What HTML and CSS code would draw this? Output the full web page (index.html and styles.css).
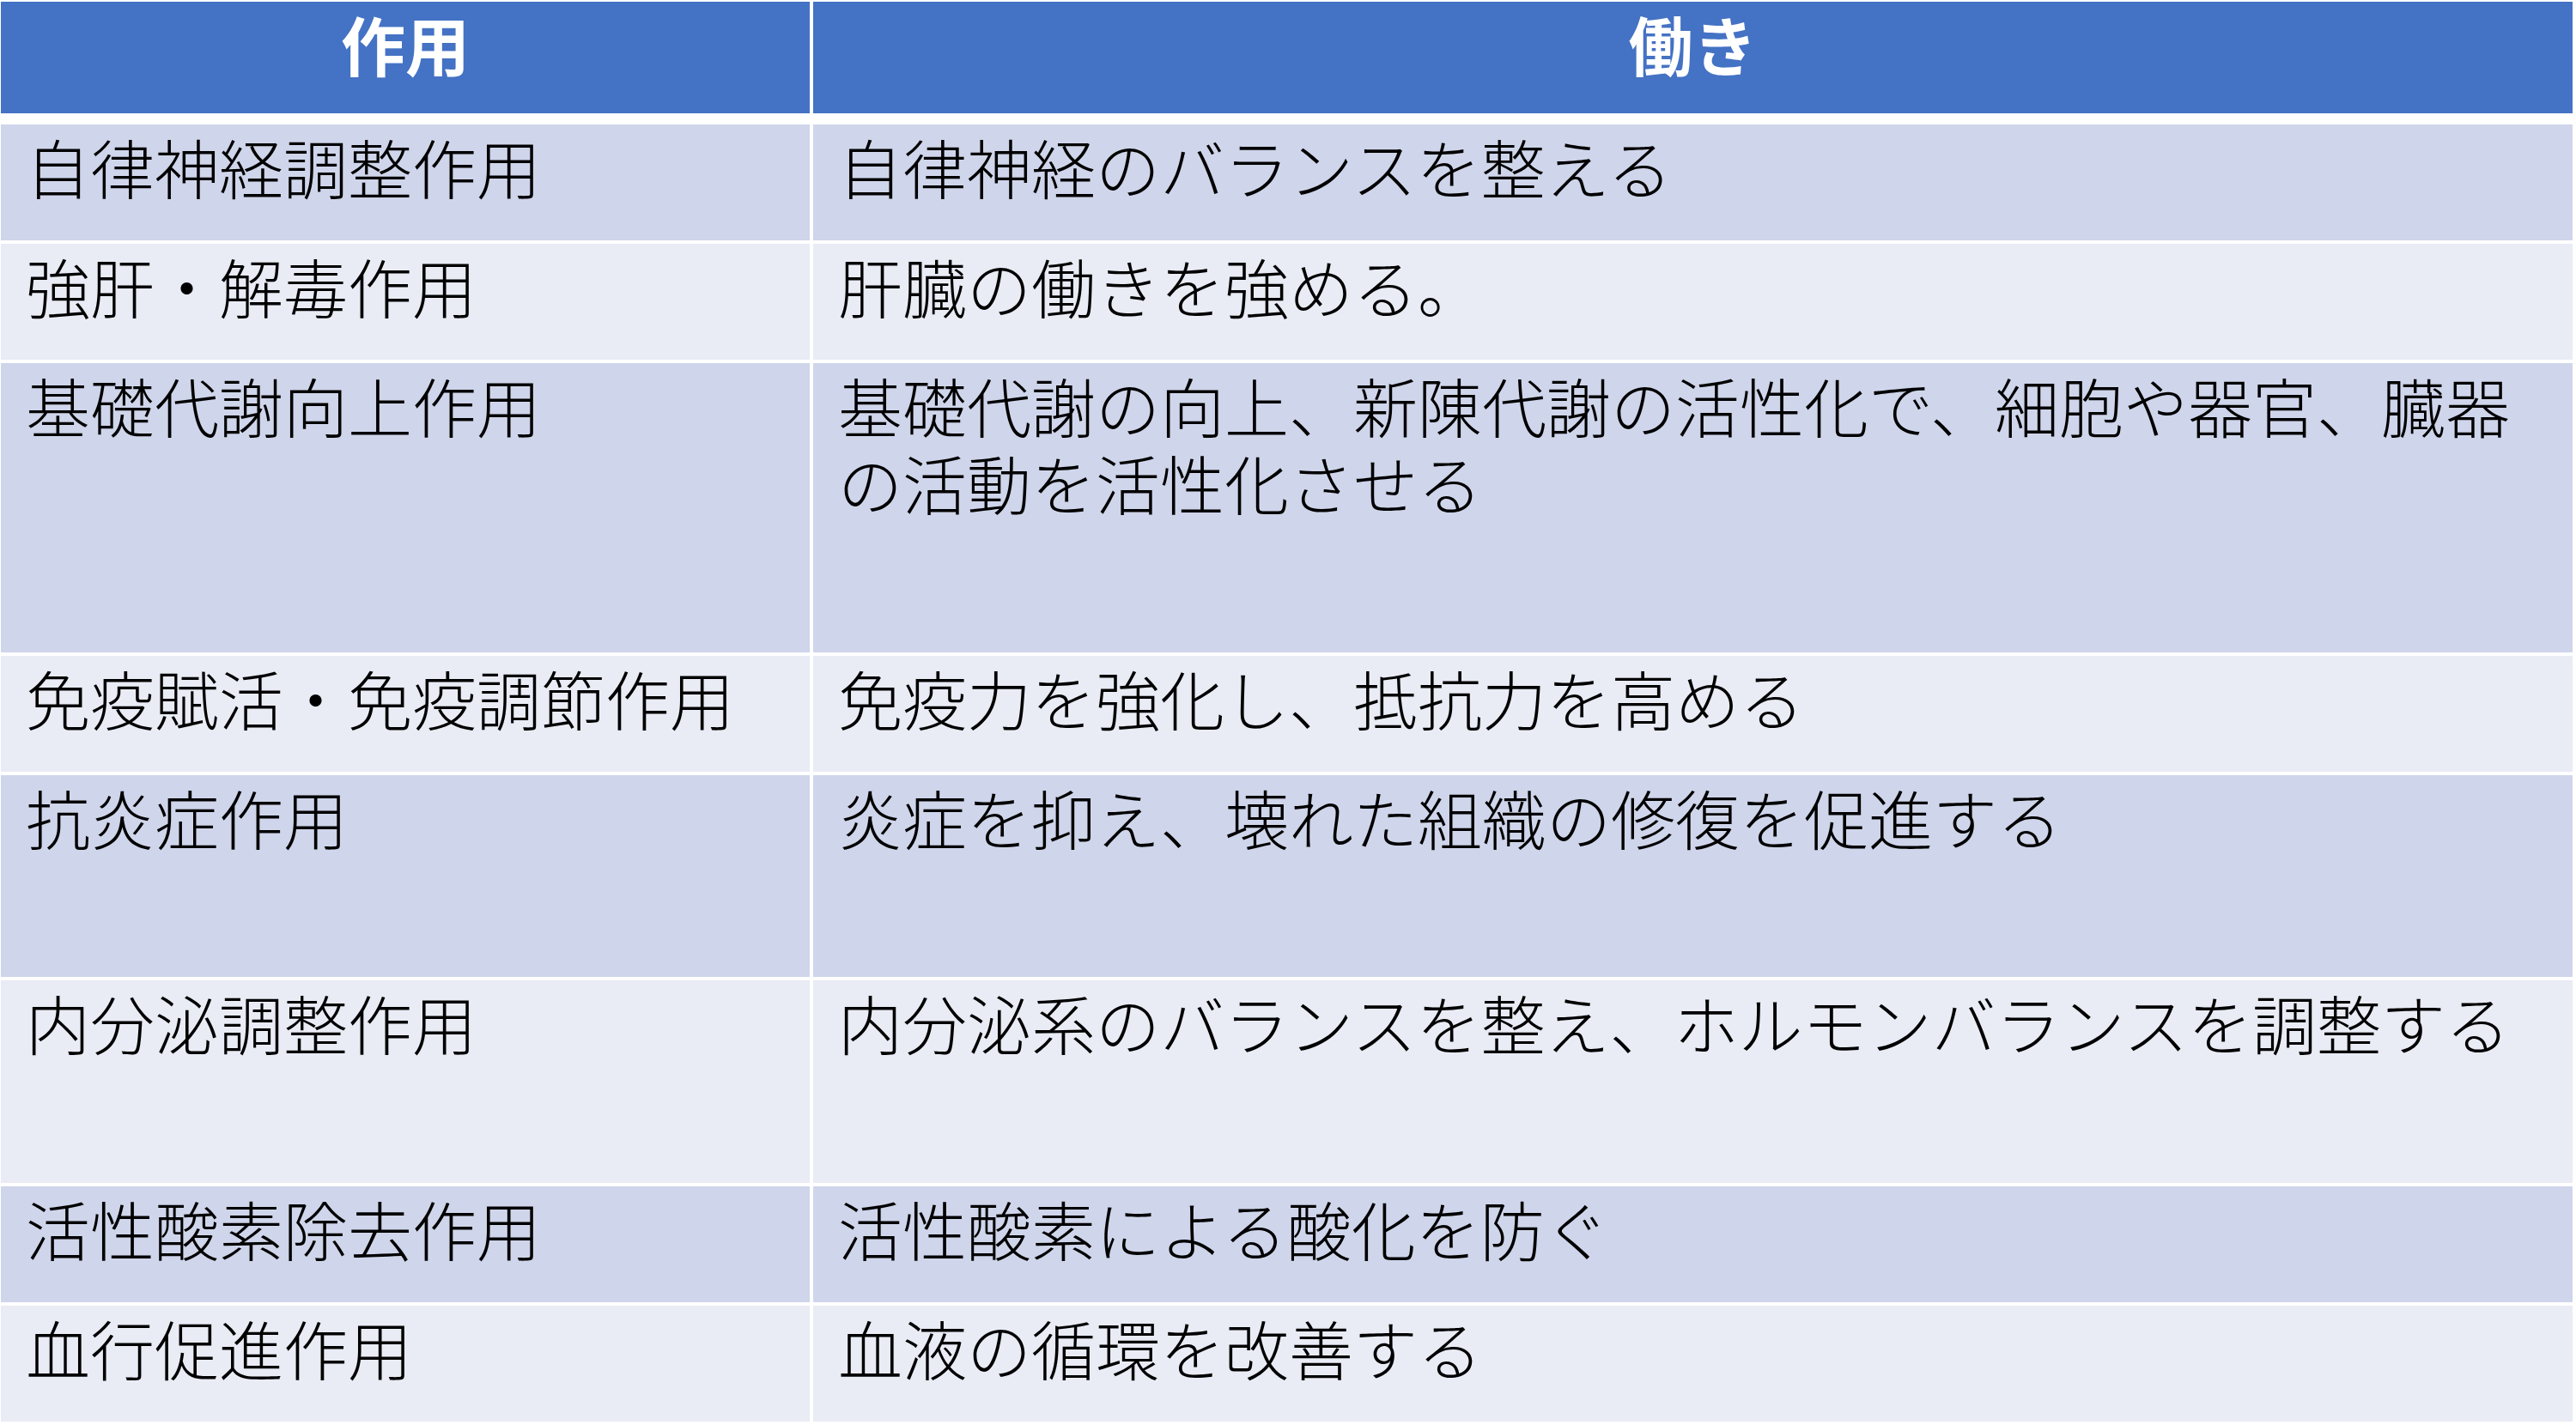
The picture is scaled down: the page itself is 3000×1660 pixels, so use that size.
FILE: index.html
```html
<!DOCTYPE html>
<html lang="ja">
<head>
<meta charset="utf-8">
<title>作用と働き</title>
<link rel="stylesheet" href="styles.css">
</head>
<body>
<div class="table">
  <div class="row head">
    <div class="cell">作用</div>
    <div class="cell">働き</div>
  </div>
  <div class="row odd h1">
    <div class="cell">自律神経調整作用</div>
    <div class="cell">自律神経のバランスを整える</div>
  </div>
  <div class="row even h1">
    <div class="cell">強肝・解毒作用</div>
    <div class="cell">肝臓の働きを強める。</div>
  </div>
  <div class="row odd h3">
    <div class="cell">基礎代謝向上作用</div>
    <div class="cell">基礎代謝の向上、新陳代謝の活性化で、細胞や器官、臓器の活動を活性化させる</div>
  </div>
  <div class="row even h1">
    <div class="cell">免疫賦活・免疫調節作用</div>
    <div class="cell">免疫力を強化し、抵抗力を高める</div>
  </div>
  <div class="row odd h2">
    <div class="cell">抗炎症作用</div>
    <div class="cell">炎症を抑え、壊れた組織の修復を促進する</div>
  </div>
  <div class="row even h2b">
    <div class="cell">内分泌調整作用</div>
    <div class="cell">内分泌系のバランスを整え、ホルモンバランスを調整する</div>
  </div>
  <div class="row odd h1">
    <div class="cell">活性酸素除去作用</div>
    <div class="cell">活性酸素による酸化を防ぐ</div>
  </div>
  <div class="row even h1">
    <div class="cell">血行促進作用</div>
    <div class="cell">血液の循環を改善する</div>
  </div>
</div>
</body>
</html>
```

FILE: styles.css
```css
html, body {
  margin: 0;
  padding: 0;
  background: #ffffff;
}

body {
  width: 3000px;
  height: 1660px;
  overflow: hidden;
  font-family: "Noto Sans CJK JP", "Noto Sans", sans-serif;
}

.table {
  display: flex;
  flex-direction: column;
  gap: 4px;
  padding: 2px 4px 0 1px;
}

.row {
  display: grid;
  grid-template-columns: 942px 2049px;
  column-gap: 4px;
  height: 135px;
}

.cell {
  box-sizing: border-box;
  padding: 4px 29px 0 29px;
  font-size: 75px;
  line-height: 90px;
  font-weight: 300;
  color: #000000;
}

.head {
  height: 130px;
  margin-bottom: 9px;
}

.head .cell {
  background: #4472c4;
  color: #ffffff;
  font-weight: 700;
  text-align: center;
  padding-top: 4px;
}

.odd .cell {
  background: #cfd5ea;
}

.even .cell {
  background: #e9ebf5;
}

.h1 { height: 135px; }
.h2 { height: 235px; }
.h2b { height: 236px; }
.h3 { height: 337px; }
```
